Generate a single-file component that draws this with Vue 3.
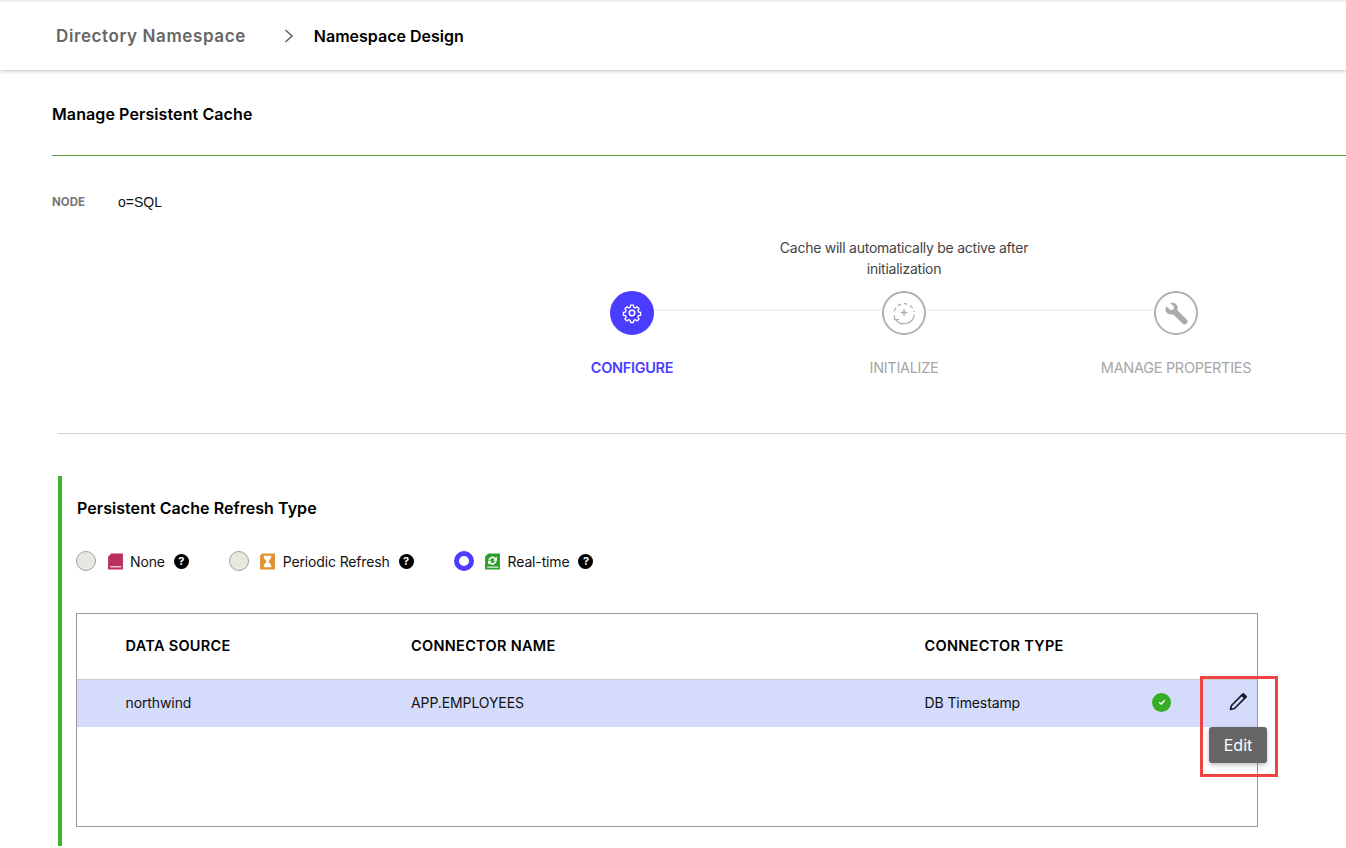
<script setup>
const steps = [
  { label: 'CONFIGURE', state: 'active', icon: 'gear' },
  { label: 'INITIALIZE', state: 'idle', icon: 'init' },
  { label: 'MANAGE PROPERTIES', state: 'idle', icon: 'wrench' }
]

const refreshTypes = [
  { label: 'None', icon: 'none', checked: false },
  { label: 'Periodic Refresh', icon: 'periodic', checked: false },
  { label: 'Real-time', icon: 'realtime', checked: true }
]
</script>

<template>
  <div class="page">
    <header class="topbar">
      <span class="crumb-parent">Directory Namespace</span>
      <svg class="crumb-arrow" width="10" height="14" viewBox="0 0 10 14">
        <path d="M1.5 1 L8 7 L1.5 13" fill="none" stroke="#666" stroke-width="1.7" />
      </svg>
      <span class="crumb-current">Namespace Design</span>
    </header>

    <main class="content">
      <h1 class="title">Manage Persistent Cache</h1>

      <div class="node-row">
        <span class="node-label">NODE</span>
        <span class="node-value">o=SQL</span>
      </div>

      <p class="step-note">Cache will automatically be active after<br />initialization</p>

      <div class="stepper">
        <div v-for="(step, index) in steps" :key="step.label" class="step" :class="step.state">
          <span v-if="index < steps.length - 1" class="connector"></span>
          <div class="step-circle">
            <svg v-if="step.icon === 'gear'" width="22" height="22" viewBox="0 0 24 24" fill="none" stroke="#fff" stroke-width="1.6" stroke-linejoin="round">
              <circle cx="12" cy="12" r="3" />
              <path d="M10.3 2.5h3.4l.5 2.6 1.8.8 2.2-1.5 2.4 2.4-1.5 2.2.8 1.8 2.6.5v3.4l-2.6.5-.8 1.8 1.5 2.2-2.4 2.4-2.2-1.5-1.8.8-.5 2.6h-3.4l-.5-2.6-1.8-.8-2.2 1.5-2.4-2.4 1.5-2.2-.8-1.8-2.6-.5v-3.4l2.6-.5.8-1.8-1.5-2.2 2.4-2.4 2.2 1.5 1.8-.8z" transform="translate(1.2 1.2) scale(.9)" />
            </svg>
            <svg v-else-if="step.icon === 'init'" width="26" height="26" viewBox="0 0 24 24" fill="none" stroke="#aaa" stroke-width="1.1">
              <path d="M3 10.5A9.5 9.5 0 0 1 21.5 11" stroke-dasharray="3.5 2.5" />
              <path d="M21.5 13.5A9.5 9.5 0 0 1 4 17.5" />
              <path d="M3.2 14v4.2h4.4" />
              <path d="M12 8.5v6M9 11.5h6" stroke-width="1.3" />
            </svg>
            <svg v-else width="26" height="26" viewBox="0 0 24 24" fill="#aaa">
              <path d="M3.4 5.9 L7 9.4 L9.6 8.8 L10.2 6.3 L6.6 2.8 C9.4 1.7 12.6 3.2 13.3 6.1 C13.6 7.3 13.5 8.4 13.1 9.3 L22 18.2 C22.9 19.1 22.9 20.5 22 21.4 L21.4 22 C20.5 22.9 19.1 22.9 18.2 22 L9.3 13.1 C6.3 14.2 3 12.5 2.4 9.4 C2.2 8.1 2.6 6.9 3.4 5.9 Z" />
            </svg>
          </div>
          <span class="step-label">{{ step.label }}</span>
        </div>
      </div>

      <hr class="section-rule" />

      <section class="refresh">
        <h2 class="refresh-title">Persistent Cache Refresh Type</h2>

        <div class="refresh-options">
          <label v-for="item in refreshTypes" :key="item.label" class="option">
            <span class="radio" :class="{ checked: item.checked }"></span>
            <svg class="option-icon" width="17" height="17" viewBox="0 0 16 16">
              <template v-if="item.icon === 'none'">
                <path d="M4 0.5H15V15.5H1V3.5Z" fill="#b9305f" />
                <path d="M3 12.5H13.5V13.5H3Z" fill="#fff" />
              </template>
              <template v-else-if="item.icon === 'periodic'">
                <path d="M3 0.5H15V15.5H1V2.5Z" fill="#e0922f" />
                <path d="M4.5 2.5H11.5V4.5L9.2 7.6V8.4L11.5 11.5V13.5H4.5V11.5L6.8 8.4V7.6L4.5 4.5Z" fill="#fff" />
              </template>
              <template v-else>
                <path d="M4 0.5H15V15.5H1V3.5Z" fill="#2e9e2a" />
                <path d="M3 12.8H13.5V13.8H3Z" fill="#fff" />
                <path d="M4 6.5A4.1 4.1 0 0 1 11 4.6L12.2 3.6V7.2H8.6L10 5.9A2.5 2.5 0 0 0 5.6 6.9ZM12 7.7A4.1 4.1 0 0 1 5 9.8L3.8 10.8V7.2H7.4L6 8.5A2.5 2.5 0 0 0 10.4 7.5Z" fill="#fff" />
              </template>
            </svg>
            <span class="option-label">{{ item.label }}</span>
            <span class="help">?</span>
          </label>
        </div>

        <div class="table-box">
          <div class="table-row table-head">
            <span>DATA SOURCE</span>
            <span>CONNECTOR NAME</span>
            <span>CONNECTOR TYPE</span>
          </div>
          <div class="table-row table-body">
            <span>northwind</span>
            <span>APP.EMPLOYEES</span>
            <span>DB Timestamp</span>
            <span class="status">
              <svg width="10" height="10" viewBox="0 0 10 10">
                <path d="M2.2 5.2 L4.2 7 L7.8 3.2" fill="none" stroke="#fff" stroke-width="1.5" />
              </svg>
            </span>
            <span class="edit-cell">
              <svg width="20" height="20" viewBox="0 0 20 20" fill="none" stroke="#1a1a2a" stroke-width="1.7" stroke-linejoin="round">
                <path d="M2.5 17.5 L3.5 13.5 L13.8 3.2 L16.8 6.2 L6.5 16.5 Z" />
                <path d="M14 3 L15.3 1.8 L18.2 4.7 L17 6 Z" fill="#1a1a2a" />
              </svg>
            </span>
          </div>
          <div class="tooltip">Edit</div>
          <div class="highlight"></div>
        </div>
      </section>
    </main>
  </div>
</template>

<style>
html, body {
  margin: 0;
  background: #fff;
  overflow: hidden;
}
</style>

<style scoped>
.page {
  width: 1346px;
  height: 848px;
  overflow: hidden;
  font-family: Inter, "Liberation Sans", sans-serif;
  color: #111;
  border-top: 2px solid #f0f0f0;
  box-sizing: border-box;
}

.topbar {
  height: 68px;
  box-sizing: border-box;
  padding-left: 56px;
  display: flex;
  align-items: center;
  box-shadow: 0 1px 4px rgba(0, 0, 0, 0.25);
}

.crumb-parent {
  font-size: 17px;
  font-weight: 600;
  color: #666;
  letter-spacing: 0.6px;
}

.crumb-arrow {
  margin: 0 20px 0 38px;
}

.crumb-current {
  font-size: 16px;
  font-weight: 600;
  color: #000;
}

.content {
  padding-left: 52px;
}

.title {
  margin: 0;
  padding-top: 34px;
  height: 86px;
  box-sizing: border-box;
  font-size: 16px;
  line-height: 20px;
  font-weight: 600;
  color: #000;
  letter-spacing: 0.1px;
  border-bottom: 1px solid #55a33a;
}

.node-row {
  margin-top: 37px;
  display: flex;
  align-items: center;
  height: 18px;
}

.node-label {
  width: 66px;
  font-size: 11.5px;
  font-weight: 700;
  color: #777;
}

.node-value {
  font-size: 14px;
  font-family: "Liberation Sans", sans-serif;
}

.step-note {
  margin: 26px 0 0 710px;
  width: 284px;
  text-align: center;
  font-size: 14px;
  line-height: 21px;
  color: #444;
  letter-spacing: -0.25px;
}

.stepper {
  margin: 12px 0 0 444px;
  display: grid;
  grid-template-columns: repeat(3, 272px);
}

.step {
  position: relative;
  display: flex;
  flex-direction: column;
  align-items: center;
}

.connector {
  position: absolute;
  left: 158px;
  top: 18px;
  width: 228px;
  height: 2px;
  background: #eef2f7;
}

.step-circle {
  width: 44px;
  height: 44px;
  box-sizing: border-box;
  border-radius: 50%;
  border: 2px solid #b0b0b0;
  display: flex;
  align-items: center;
  justify-content: center;
}

.step.active .step-circle {
  background: #4a3dff;
  border-color: #4a3dff;
}

.step-label {
  margin-top: 23px;
  font-size: 14.5px;
  line-height: 20px;
  color: #a6a6a6;
  letter-spacing: -0.3px;
}

.step.active .step-label {
  color: #4a3dff;
  font-weight: 600;
}

.section-rule {
  margin: 55px 0 0 6px;
  border: 0;
  border-top: 1px solid #d5d5d5;
}

.refresh {
  margin: 42px 0 0 6px;
  border-left: 4px solid #3cb52a;
  padding-left: 14px;
  height: 370px;
}

.refresh-title {
  margin: 0 0 0 1px;
  padding-top: 22px;
  font-size: 16px;
  line-height: 20px;
  font-weight: 600;
  color: #000;
  letter-spacing: 0.05px;
}

.refresh-options {
  margin-top: 33px;
  display: flex;
  align-items: center;
}

.option {
  display: flex;
  align-items: center;
  margin-right: 40px;
  font-size: 14px;
  color: #111;
}

.radio {
  width: 20px;
  height: 20px;
  box-sizing: border-box;
  border-radius: 50%;
  background: #e8e8e0;
  border: 1px solid #a0a0a0;
}

.radio.checked {
  background: #fff;
  border: 5px solid #4a3dff;
}

.option-icon {
  margin: 0 6.5px 0 10.5px;
}

.option-label {
  letter-spacing: -0.15px;
}

.help {
  margin-left: 9px;
  width: 15px;
  height: 15px;
  border-radius: 50%;
  background: #000;
  color: #fff;
  font-size: 11px;
  font-weight: 700;
  line-height: 15px;
  text-align: center;
}

.table-box {
  position: relative;
  margin-top: 42px;
  width: 1182px;
  height: 214px;
  box-sizing: border-box;
  border: 1px solid #999;
}

.table-row {
  display: grid;
  grid-template-columns: 285.5px 513.5px 227px 1fr;
  padding-left: 48.5px;
  align-items: center;
}

.table-head {
  height: 66px;
  box-sizing: border-box;
  padding-bottom: 3px;
  font-size: 14.5px;
  font-weight: 600;
  color: #000;
  letter-spacing: 0.3px;
  border-bottom: 1px solid #ccc;
}

.table-body {
  height: 47px;
  padding-bottom: 3px;
  box-sizing: border-box;
  background: #d5dbfb;
  font-size: 14px;
  letter-spacing: -0.1px;
  grid-template-columns: 285.5px 513.5px 227.5px 47px 1fr;
}

.status {
  width: 19px;
  height: 19px;
  border-radius: 50%;
  background: #35ad24;
  display: flex;
  align-items: center;
  justify-content: center;
}

.edit-cell {
  display: flex;
  padding-left: 29px;
}

.tooltip {
  position: absolute;
  right: -10px;
  top: 113px;
  width: 58px;
  height: 36px;
  border-radius: 3px;
  background: #666;
  color: #fff;
  font-size: 16px;
  line-height: 36px;
  text-align: center;
  box-shadow: 0 2px 4px rgba(0, 0, 0, 0.25);
}

.highlight {
  position: absolute;
  right: -21px;
  top: 62px;
  width: 78px;
  height: 101px;
  box-sizing: border-box;
  border: 3px solid #ef4444;
}
</style>
